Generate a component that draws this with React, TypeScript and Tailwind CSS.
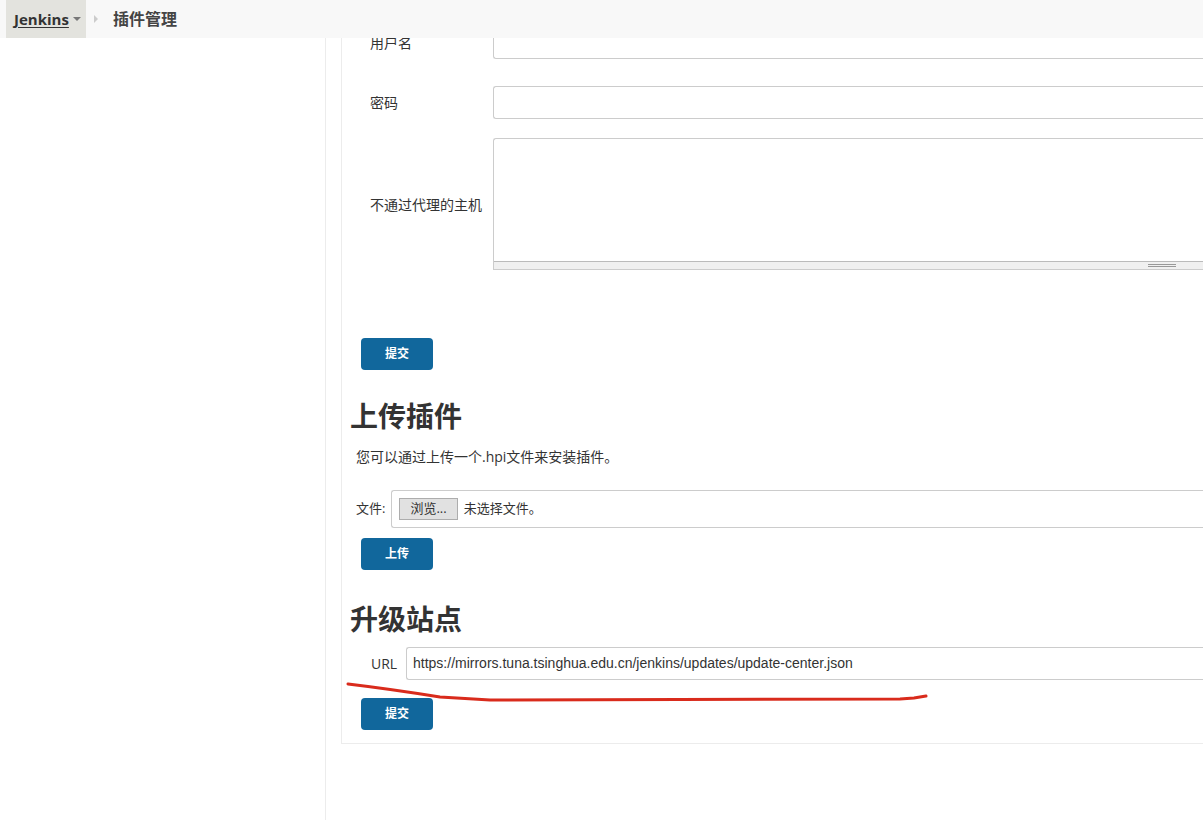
import React from 'react';

const cjk = "font-['Open_Sans','Noto_Sans_CJK_SC',sans-serif]";

function BlueButton({ label }: { label: string }) {
  return (
    <button className="w-[72px] h-[32px] rounded-[4px] bg-[#11679c] text-white text-[12px] font-bold">
      {label}
    </button>
  );
}

export default function App() {
  return (
    <div className={`relative w-[1203px] h-[820px] overflow-hidden bg-white text-[#333] ${cjk}`}>
      {/* Breadcrumb bar */}
      <div className="absolute top-0 left-0 right-0 z-10 h-[38px] bg-[#f8f8f8] flex items-center">
        <div className="ml-[6px] h-full w-[80px] bg-[#e3e3de] flex items-center pl-[8px]">
          <span className="text-[15px] font-bold underline decoration-1 underline-offset-2">Jenkins</span>
          <span className="ml-[4px] w-0 h-0 border-l-[4px] border-r-[4px] border-t-[4px] border-l-transparent border-r-transparent border-t-[#777]" />
        </div>
        <span className="ml-[8px] w-0 h-0 border-t-[4px] border-b-[4px] border-l-[4px] border-t-transparent border-b-transparent border-l-[#ccc]" />
        <span className="ml-[15px] text-[16px] font-bold text-[#444]">插件管理</span>
      </div>

      <div className="flex h-full">
        {/* Side panel */}
        <div className="w-[326px] shrink-0 border-r border-[#ececec]" />

        {/* Main */}
        <div className="flex-1 pl-[15px]">
          <div className="border-l border-b border-[#ececec] mt-[-20px] pb-[13px]">
            {/* proxy form */}
            <div className="pt-[46px]">
              <div className="flex items-center h-[33px]">
                <div className="w-[151px] pl-[28px] text-[14px]">用户名</div>
                <div className="flex-1 h-[33px] border border-[#ccc] rounded-l-[3px] border-r-0" />
              </div>
              <div className="flex items-center h-[33px] mt-[27px]">
                <div className="w-[151px] pl-[28px] text-[14px]">密码</div>
                <div className="flex-1 h-[33px] border border-[#ccc] rounded-l-[3px] border-r-0" />
              </div>
              <div className="flex items-center h-[132px] mt-[19px]">
                <div className="w-[151px] pl-[28px] text-[14px]">不通过代理的主机</div>
                <div className="flex-1 h-[132px] border border-[#ccc] border-r-0 rounded-tl-[3px] flex flex-col">
                  <div className="flex-1" />
                  <div className="h-[8px] border-t border-[#bbb] bg-[#f0f0f0] flex items-center justify-end pr-[27px]">
                    <div className="w-[28px] h-[3px] border-y border-[#999]" />
                  </div>
                </div>
              </div>
            </div>

            <div className="pl-[19px] mt-[68px]">
              <BlueButton label="提交" />
            </div>

            {/* upload */}
            <h2 className="pl-[8px] mt-[28px] text-[28px] font-bold leading-[36px] text-[#333]">上传插件</h2>
            <p className="pl-[14px] mt-[14px] text-[14px] leading-[18px]">您可以通过上传一个.hpi文件来安装插件。</p>
            <div className="flex items-center mt-[24px] pl-[14px]">
              <span className="text-[13px] mr-[6px]">文件:</span>
              <div className="flex-1 h-[38px] border border-[#ccc] border-r-0 rounded-l-[3px] flex items-center pl-[7px]">
                <span className="h-[22px] px-[10px] bg-[#e1e1e1] border border-[#adadad] text-[13px] flex items-center">浏览...</span>
                <span className="ml-[6px] text-[13px]">未选择文件。</span>
              </div>
            </div>
            <div className="pl-[19px] mt-[10px]">
              <BlueButton label="上传" />
            </div>

            {/* update site */}
            <h2 className="pl-[8px] mt-[31px] text-[28px] font-bold leading-[36px] text-[#333]">升级站点</h2>
            <div className="flex items-center mt-[10px] pl-[29px]">
              <span className="text-[14px] w-[35px]">URL</span>
              <div className="flex-1 h-[33px] border border-[#ccc] border-r-0 rounded-l-[3px] flex items-center pl-[6px] text-[14px] font-['Liberation_Sans',sans-serif] text-[#333]">
                https://mirrors.tuna.tsinghua.edu.cn/jenkins/updates/update-center.json
              </div>
            </div>
            <div className="pl-[19px] mt-[18px]">
              <BlueButton label="提交" />
            </div>
          </div>
        </div>
      </div>

      {/* red annotation stroke */}
      <svg className="absolute left-0 top-0 pointer-events-none" width="1203" height="820">
        <path
          d="M348 684 Q 390 689 440 697 L 490 700 L 900 699 L 914 698 L 926 696"
          fill="none"
          stroke="#d92b1c"
          strokeWidth="3"
          strokeLinecap="round"
        />
      </svg>
    </div>
  );
}
